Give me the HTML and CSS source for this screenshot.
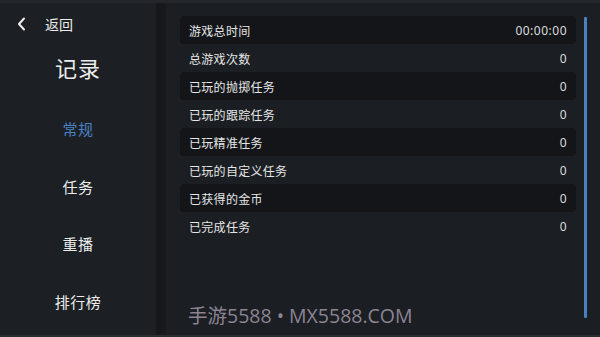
FILE: index.html
```html
<!DOCTYPE html>
<html lang="zh">
<head>
<meta charset="utf-8">
<link rel="stylesheet" href="styles.css">
</head>
<body>
<div class="app">
  <aside class="side">
    <div class="back">
      <svg class="arrow" width="12" height="14" viewBox="0 0 12 14"><path d="M8 1.5 L3 7 L8 12.5" fill="none" stroke="#f0f0f0" stroke-width="2" stroke-linecap="round" stroke-linejoin="round"/></svg>
      <span class="back-text">返回</span>
    </div>
    <h1 class="title">记录</h1>
    <nav class="nav">
      <div class="nav-item active">常规</div>
      <div class="nav-item">任务</div>
      <div class="nav-item">重播</div>
      <div class="nav-item">排行榜</div>
    </nav>
  </aside>
  <div class="divider"></div>
  <main class="main">
    <div class="list">
      <div class="row dark"><span>游戏总时间</span><span class="val">00:00:00</span></div>
      <div class="row"><span>总游戏次数</span><span class="val">0</span></div>
      <div class="row dark"><span>已玩的抛掷任务</span><span class="val">0</span></div>
      <div class="row"><span>已玩的跟踪任务</span><span class="val">0</span></div>
      <div class="row dark"><span>已玩精准任务</span><span class="val">0</span></div>
      <div class="row"><span>已玩的自定义任务</span><span class="val">0</span></div>
      <div class="row dark"><span>已获得的金币</span><span class="val">0</span></div>
      <div class="row"><span>已完成任务</span><span class="val">0</span></div>
    </div>
    <div class="scroll"></div>
    <div class="watermark">手游5588 • MX5588.COM</div>
  </main>
</div>
</body>
</html>
```
FILE: styles.css
```css
html, body {
  margin: 0;
  padding: 0;
  background: #1b1e22;
}
.app {
  width: 600px;
  height: 337px;
  display: flex;
  overflow: hidden;
  font-family: "Noto Sans CJK SC", "Noto Sans", sans-serif;
  color: #ececec;
  border-top: 3px solid #23272b;
  border-bottom: 2px solid #2a2e33;
  box-sizing: border-box;
}
.side {
  width: 156px;
  background: #1c2024;
  display: flex;
  flex-direction: column;
  align-items: center;
}
.back {
  align-self: flex-start;
  display: flex;
  align-items: center;
  margin-top: 11px;
  padding-left: 16px;
  height: 20px;
}
.arrow {
  display: block;
}
.back-text {
  margin-left: 17px;
  font-size: 14px;
  line-height: 20px;
}
.title {
  margin: 19px 0 0 0;
  font-size: 22px;
  font-weight: 400;
  line-height: 28px;
  letter-spacing: 1px;
}
.nav {
  display: flex;
  flex-direction: column;
  align-items: center;
  margin-top: 37px;
  gap: 36.7px;
}
.nav-item {
  font-size: 15px;
  line-height: 21px;
  letter-spacing: 0.5px;
}
.nav-item.active {
  color: #4a80c4;
}
.divider {
  width: 10px;
  background: linear-gradient(90deg, #15171a, #181b1e);
}
.main {
  flex: 1;
  position: relative;
  display: flex;
  padding: 13px 0 0 14px;
  background: #1b1e22;
}
.list {
  width: 396px;
  display: flex;
  flex-direction: column;
}
.row {
  height: 28px;
  display: flex;
  align-items: center;
  justify-content: space-between;
  padding: 0 9px;
  border-radius: 4px;
  font-size: 12px;
  color: #e6e6e6;
  letter-spacing: 0.3px;
}
.row.dark {
  background: #131519;
}
.val {
  font-family: "Noto Sans", sans-serif;
  font-size: 12px;
  color: #dcdcdc;
  letter-spacing: 0.5px;
}
.scroll {
  width: 3px;
  height: 301px;
  margin-left: 8px;
  margin-top: 1px;
  background: #4a7fc1;
  border-radius: 1px;
}
.watermark {
  position: absolute;
  left: 22px;
  top: 297px;
  font-family: "Open Sans", "Noto Sans CJK SC", sans-serif;
  font-size: 19.5px;
  color: #8c8494;
  white-space: nowrap;
}
```
